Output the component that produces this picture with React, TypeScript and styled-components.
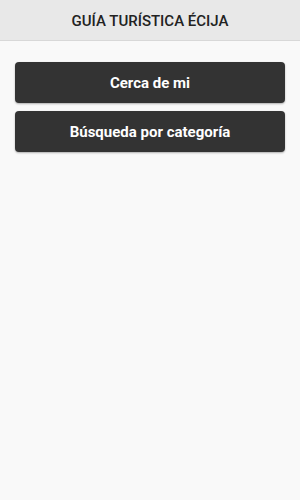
import styled, { createGlobalStyle } from "styled-components";

const GlobalStyle = createGlobalStyle`
  html, body {
    margin: 0;
    padding: 0;
    background: #f9f9f9;
    font-family: Roboto, "Liberation Sans", sans-serif;
  }
`;

const menuItems = ["Cerca de mi", "Búsqueda por categoría"];

const App = () => {
  return (
    <Page>
      <GlobalStyle />
      <Header>
        <Title>GUÍA TURÍSTICA ÉCIJA</Title>
      </Header>
      <Menu>
        {menuItems.map((item) => (
          <MenuButton key={item}>{item}</MenuButton>
        ))}
      </Menu>
    </Page>
  );
};

export default App;

const Page = styled.div`
  width: 100%;
  min-height: 500px;
  background: #f9f9f9;
`;

const Header = styled.header`
  height: 40px;
  display: flex;
  align-items: center;
  justify-content: center;
  background: #e8e8e8;
  border-bottom: 1px solid #d8d8d8;
`;

const Title = styled.h1`
  margin: 0;
  padding-top: 1px;
  font-size: 15px;
  font-weight: 500;
  color: #222;
`;

const Menu = styled.nav`
  display: flex;
  flex-direction: column;
  gap: 8px;
  padding: 21px 15px;
`;

const MenuButton = styled.button`
  height: 41px;
  border: none;
  border-radius: 4px;
  background: #333333;
  color: #ffffff;
  font-family: Roboto, "Liberation Sans", sans-serif;
  font-size: 15px;
  font-weight: 700;
  box-shadow: 0 1px 2px rgba(0, 0, 0, 0.3);
  cursor: pointer;
`;
